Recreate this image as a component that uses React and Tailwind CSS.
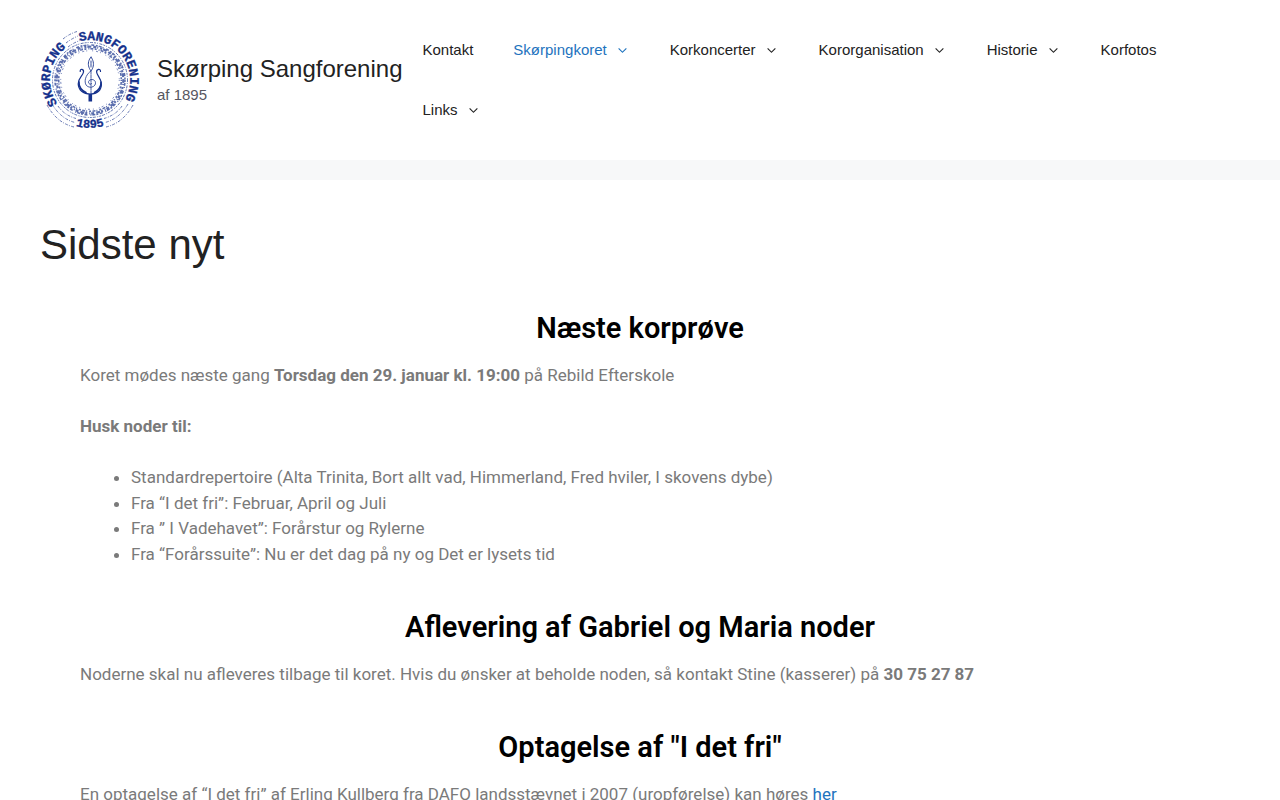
const menu = [
  { label: "Kontakt" },
  { label: "Skørpingkoret", sub: true, active: true },
  { label: "Korkoncerter", sub: true },
  { label: "Kororganisation", sub: true },
  { label: "Historie", sub: true },
  { label: "Korfotos" },
  { label: "Links", sub: true },
];

function Chevron() {
  return (
    <svg viewBox="0 0 330 512" className="size-[15px] fill-current" aria-hidden="true">
      <path d="M305.913 197.085c0 2.266-1.133 4.815-2.833 6.514L171.087 335.593c-1.7 1.7-4.249 2.832-6.515 2.832s-4.815-1.133-6.515-2.832L26.064 203.599c-1.7-1.7-2.832-4.248-2.832-6.514s1.132-4.816 2.832-6.515l14.162-14.163c1.7-1.699 3.966-2.832 6.515-2.832 2.266 0 4.815 1.133 6.515 2.832l111.316 111.317 111.316-111.317c1.7-1.699 4.249-2.832 6.515-2.832s4.815 1.133 6.515 2.832l14.162 14.163c1.7 1.7 2.833 4.249 2.833 6.515z" />
    </svg>
  );
}

function Logo() {
  return (
    <svg viewBox="0 0 100 100" className="size-[100px] shrink-0 overflow-visible" role="img" aria-label="Skørping Sangforening 1895">
      <defs>
        {/* Clockwise arcs for the names, counter-clockwise for the year */}
        <path id="arc-left" d="M17.6 73.5 A40 40 0 0 1 50 10" />
        <path id="arc-right" d="M39.6 11.4 A40 40 0 1 1 50 90" />
        <path id="arc-year" d="M10 76.5 A48 48 0 0 0 90 76.5" />
      </defs>
      <g fill="#15318c" stroke="#15318c" strokeWidth="0.3" className="font-['Liberation_Mono',monospace] text-[13px] font-bold">
        <text><textPath href="#arc-left">SKØRPING</textPath></text>
        <text><textPath href="#arc-right">SANGFORENING</textPath></text>
        <text className="text-[12px]" textAnchor="middle"><textPath href="#arc-year" startOffset="50%">1895</textPath></text>
      </g>
      <g fill="none" stroke="#15318c">
        <circle cx="50" cy="50" r="37.5" strokeWidth="0.9" strokeDasharray="2 1 1 1.5 3 1" opacity="0.75" />
        <circle cx="50" cy="50" r="35" strokeWidth="1.5" strokeDasharray="2 1 3 1 1 3 3 1.5" opacity="0.7" />
        <circle cx="50" cy="50" r="33.3" strokeWidth="2.2" strokeDasharray="3 1 1 2 2 1 4 2" opacity="0.7" />
        <circle cx="50" cy="50" r="31.3" strokeWidth="1.6" strokeDasharray="1 1 3 1.4 2 2" opacity="0.7" />
        <circle cx="50" cy="50" r="29.3" strokeWidth="1" strokeDasharray="1 3 2 2 1 5" opacity="0.6" />
        <g strokeWidth="0.8" strokeDasharray="3 1.2 1 1.4" opacity="0.8">
          <path d="M23 9 Q29 4 37 1.5" />
          <path d="M26 13 Q31 9 38 6" />
          <path d="M28 17 Q33 13 40 10.5" />
          <path d="M7 75 Q17 93 34 97" />
          <path d="M12 74 Q21 89 35 92.5" />
          <path d="M18 76 Q24 85 36 88.5" />
          <path d="M93 75 Q83 93 66 97" />
          <path d="M88 74 Q79 89 65 92.5" />
          <path d="M82 76 Q76 85 64 88.5" />
        </g>
        <g strokeLinecap="round">
          <path d="M40.2 41.5 C40 38 44 39 43.5 42 C43 46 38 48 38.2 54 C38.5 60 43 64 50.3 64 C57.5 64 61.5 60 61.4 54 C61.3 48 57 46 56.6 42 C56.5 39 60.5 38 60.5 41.5" strokeWidth="1.2" />
          <path d="M39 52 C38.5 57 42 61 46 62.5 M61 52 C61.5 57 58 61 54.5 62.5" strokeWidth="1.6" />
          <path d="M51 27 C47 32 48 37 51 41 C54 37 54.5 32 51 27 Z M51 31 L51 37" strokeWidth="0.9" strokeDasharray="2 0.8" />
          <path d="M51 41 C45 45 43.5 53 47 56 C50 58.5 55.5 57 55.5 53 C55.5 48.5 49 48.5 48.5 52 C48.5 54 50.5 55 51.5 53.5" strokeWidth="0.8" strokeDasharray="3 0.8" />
          <path d="M51 41 L51 64" strokeWidth="0.8" strokeDasharray="3 1" />
          <path d="M50.3 64 L50.3 71.5" strokeWidth="3.6" strokeLinecap="butt" />
        </g>
      </g>
    </svg>
  );
}

function Section({ title, children }) {
  return (
    <section className="mb-5">
      <h2 className="mb-5 text-center text-[29px] leading-none font-semibold text-black">{title}</h2>
      <div className="px-10 pb-[1.5em]">{children}</div>
    </section>
  );
}

export default function App() {
  return (
    <div className="min-h-screen bg-[#f7f8f9] font-['Liberation_Sans',sans-serif] text-[#222222]">
      <header className="mb-5 flex items-center bg-white px-10 py-5">
        <div className="flex shrink-0 items-center gap-[17px]">
          <a href="#"><Logo /></a>
          <div>
            <p className="text-[24px] leading-[30px]"><a href="#">Skørping Sangforening</a></p>
            <p className="text-[15px] leading-[22px] text-[#575760]">af 1895</p>
          </div>
        </div>
        <nav className="flex-1" aria-label="Hovedmenu">
          <ul className="flex flex-wrap">
            {menu.map((item) => (
              <li key={item.label}>
                <a
                  href="#"
                  className={`flex items-center gap-2 px-5 text-[15px] leading-[60px] ${item.active ? "text-[#1e73be]" : ""}`}
                >
                  {item.label}
                  {item.sub && <Chevron />}
                </a>
              </li>
            ))}
          </ul>
        </nav>
      </header>

      <main className="bg-white p-10">
        <h1 className="mb-11 text-[42px] leading-[50px]">Sidste nyt</h1>
        <div className="font-[Roboto,sans-serif] text-[17px] leading-[1.5] text-[#7a7a7a]">
          <Section title="Næste korprøve">
            <p className="mb-[1.5em]">
              Koret mødes næste gang <strong>Torsdag den 29. januar kl. 19:00</strong> på Rebild Efterskole
            </p>
            <p className="mb-[1.5em]"><strong>Husk noder til:</strong></p>
            <ul className="list-disc pl-[51px]">
              <li>Standardrepertoire (Alta Trinita, Bort allt vad, Himmerland, Fred hviler, I skovens dybe)</li>
              <li>Fra “I det fri”: Februar, April og Juli</li>
              <li>Fra ” I Vadehavet”: Forårstur og Rylerne</li>
              <li>Fra “Forårssuite”: Nu er det dag på ny og Det er lysets tid</li>
            </ul>
          </Section>
          <Section title="Aflevering af Gabriel og Maria noder">
            <p>
              Noderne skal nu afleveres tilbage til koret. Hvis du ønsker at beholde noden, så kontakt Stine (kasserer) på{" "}
              <strong>30 75 27 87</strong>
            </p>
          </Section>
          <Section title={'Optagelse af "I det fri"'}>
            <p>
              En optagelse af “I det fri” af Erling Kullberg fra DAFO landsstævnet i 2007 (uropførelse) kan høres{" "}
              <a href="#" className="text-[#1e73be]">her</a>
            </p>
          </Section>
        </div>
      </main>
    </div>
  );
}
